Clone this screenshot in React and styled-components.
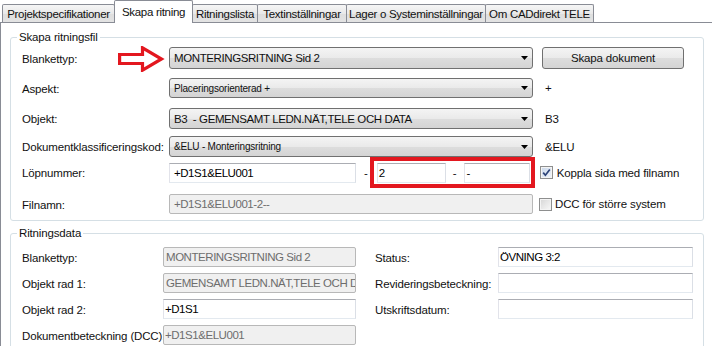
import React from 'react'
import styled, { createGlobalStyle } from 'styled-components'

const GlobalStyle = createGlobalStyle`
  html, body { margin: 0; padding: 0; background: #fff; }
  body {
    font-family: "Liberation Sans", Arial, sans-serif;
    font-size: 11.5px;
    letter-spacing: -0.15px;
    color: #111;
  }
`

const Window = styled.div`
  width: 712px;
  height: 346px;
  overflow: hidden;
  background: #fff;
`

const TabStrip = styled.div`
  display: flex;
  align-items: flex-end;
  height: 22px;
  padding-left: 2px;
`

const Tab = styled.div`
  position: relative;
  z-index: ${p => (p.$active ? 2 : 1)};
  width: ${p => p.$w}px;
  height: ${p => (p.$active ? 23 : 18)}px;
  margin-right: -1px;
  margin-bottom: ${p => (p.$active ? -1 : 0)}px;
  box-sizing: border-box;
  display: flex;
  align-items: center;
  justify-content: center;
  padding-bottom: ${p => (p.$active ? 1 : 0)}px;
  border: 1px solid #898c95;
  border-bottom: none;
  border-radius: 2px 2px 0 0;
  background: ${p => (p.$active ? '#fff' : 'linear-gradient(#f6f6f6, #e9e9e9 50%, #dedede 51%, #e3e3e3)')};
  letter-spacing: -0.3px;
  white-space: nowrap;
`

const TabPage = styled.div`
  width: 730px;
  height: 330px;
  box-sizing: border-box;
  border-top: 1px solid #898c95;
  border-left: 1px solid #898c95;
  padding-left: 9px;
`

const Group = styled.fieldset`
  width: 694px;
  box-sizing: border-box;
  margin: ${p => p.$mt}px 0 0 0;
  padding: 0;
  min-width: 0;
  border: 1px solid #d5dfe5;
  border-radius: 3px;
`

const Legend = styled.legend`
  margin-left: 6px;
  padding: 0 2px;
  line-height: 13px;
`

const GroupBody = styled.div`
  padding: ${p => p.$pt}px 0 ${p => p.$pb}px 11px;
`

const Row = styled.div`
  display: flex;
  align-items: center;
  height: ${p => p.$h}px;
  margin-top: ${p => p.$mt || 0}px;
`

const Label = styled.div`
  flex: none;
  width: ${p => p.$w || 147}px;
  box-sizing: border-box;
  padding-left: ${p => p.$pl || 0}px;
  padding-top: 1px;
  display: flex;
  align-items: center;
  white-space: nowrap;
`

const Arrow = styled.svg`
  margin-left: auto;
  margin-right: 4px;
`

const Combo = styled.div`
  flex: none;
  width: 364px;
  height: ${p => p.$h}px;
  box-sizing: border-box;
  display: flex;
  align-items: center;
  padding-left: 4px;
  border: 1px solid #707070;
  border-radius: 3px;
  background: linear-gradient(#f4f4f4, #eaeaea 50%, #dddddd 51%, #d4d4d4);
  font-size: ${p => (p.$small ? 10 : 11.5)}px;
  letter-spacing: ${p => (p.$small ? -0.2 : -0.4)}px;
  white-space: nowrap;
`

const DropArrow = styled.svg`
  margin-left: auto;
  margin-right: 4px;
  flex: none;
`

const Button = styled.div`
  flex: none;
  width: 142px;
  height: 22px;
  margin-left: 9px;
  box-sizing: border-box;
  display: flex;
  align-items: center;
  justify-content: center;
  border: 1px solid #707070;
  border-radius: 3px;
  background: linear-gradient(#f4f4f4, #eaeaea 50%, #dddddd 51%, #d4d4d4);
`

const Extra = styled.span`
  margin-left: 12px;
`

const Field = styled.div`
  flex: none;
  width: ${p => p.$w}px;
  height: 20px;
  box-sizing: border-box;
  display: flex;
  align-items: center;
  padding-left: ${p => p.$pl ?? 2}px;
  border: 1px solid;
  border-color: ${p => (p.$disabled ? '#b8b8b8' : '#abadb3 #dbdfe6 #e3e9ef #e2e3ea')};
  border-radius: ${p => (p.$disabled ? 2 : 0)}px;
  background: ${p => (p.$disabled ? '#f0f0f0' : '#fff')};
  color: ${p => (p.$disabled ? '#6d6d6d' : '#000')};
  letter-spacing: -0.45px;
  white-space: nowrap;
  overflow: hidden;
`

const Dash = styled.span`
  margin: 0 ${p => p.$r}px 0 ${p => p.$l}px;
`

const RedBox = styled.div`
  flex: none;
  width: 165px;
  height: 31px;
  box-sizing: border-box;
  display: flex;
  align-items: center;
  padding-left: 3px;
  border: 4px solid #e3171f;
`

const CheckBox = styled.span`
  flex: none;
  width: 13px;
  height: 13px;
  box-sizing: border-box;
  margin-left: ${p => p.$ml}px;
  display: flex;
  align-items: center;
  justify-content: center;
  border: 1px solid #8e8f8f;
  box-shadow: inset 0 0 0 1px #f4f4f4;
  background: ${p => (p.$checked ? 'linear-gradient(135deg, #c9d7ea, #f1f5fb)' : 'linear-gradient(135deg, #d6d6d6, #f9f9f9)')};
`

const CheckText = styled.span`
  margin-left: ${p => p.$ml}px;
  white-space: nowrap;
`

const DataGrid = styled.div`
  display: grid;
  grid-template-columns: 141px 193px 142px 195px;
  grid-auto-rows: 20px;
  row-gap: 6px;
  align-items: center;
`

const tabs = [
  ['Projektspecifikationer', 113],
  ['Skapa ritning', 79],
  ['Ritningslista', 66],
  ['Textinställningar', 90],
  ['Lager o Systeminställningar', 140],
  ['Om CADdirekt TELE', 109],
]

const Caret = () => (
  <DropArrow width="7" height="4" viewBox="0 0 7 4">
    <polygon points="0,0 7,0 3.5,4" fill="#000" />
  </DropArrow>
)

export default function App() {
  return (
    <Window>
      <GlobalStyle />
      <TabStrip>
        {tabs.map(([name, w], i) => (
          <Tab key={name} $w={w} $active={i === 1}>{name}</Tab>
        ))}
      </TabStrip>
      <TabPage>
        <Group $mt={8}>
          <Legend>Skapa ritningsfil</Legend>
          <GroupBody $pt={2} $pb={6}>
            <Row $h={24}>
              <Label>
                Blankettyp:
                <Arrow width="47" height="26" viewBox="0 0 47 26">
                  <polygon
                    points="1.6,8.5 24.5,8.5 24.5,1.8 43.5,13 24.5,24.2 24.5,17.5 1.6,17.5"
                    fill="#fff"
                    stroke="#e3171f"
                    strokeWidth="3.2"
                  />
                </Arrow>
              </Label>
              <Combo $h={22}>MONTERINGSRITNING Sid 2<Caret /></Combo>
              <Button>Skapa dokument</Button>
            </Row>
            <Row $h={20} $mt={8}>
              <Label>Aspekt:</Label>
              <Combo $h={20} $small>Placeringsorienterad +<Caret /></Combo>
              <Extra>+</Extra>
            </Row>
            <Row $h={21} $mt={10}>
              <Label>Objekt:</Label>
              <Combo $h={21}>B3&nbsp; - GEMENSAMT LEDN.NÄT,TELE OCH DATA<Caret /></Combo>
              <Extra>B3</Extra>
            </Row>
            <Row $h={21} $mt={7}>
              <Label>Dokumentklassificeringskod:</Label>
              <Combo $h={21} $small>&amp;ELU - Monteringsritning<Caret /></Combo>
              <Extra>&amp;ELU</Extra>
            </Row>
            <Row $h={31}>
              <Label>Löpnummer:</Label>
              <Field $w={187} $pl={4}>+D1S1&amp;ELU001</Field>
              <Dash $l={8} $r={2}>-</Dash>
              <RedBox>
                <Field $w={69} $pl={1}>2</Field>
                <Dash $l={7} $r={8}>-</Dash>
                <Field $w={66} $pl={1}>-</Field>
              </RedBox>
              <CheckBox $ml={5} $checked>
                <svg width="9" height="9" viewBox="0 0 9 9">
                  <path d="M1.2 4.6 L3.4 7.2 L7.8 1.4" fill="none" stroke="#2c4378" strokeWidth="1.7" />
                </svg>
              </CheckBox>
              <CheckText $ml={4}>Koppla sida med filnamn</CheckText>
            </Row>
            <Row $h={20} $mt={6}>
              <Label>Filnamn:</Label>
              <Field $w={364} $pl={4} $disabled>+D1S1&amp;ELU001-2--</Field>
              <CheckBox $ml={6} />
              <CheckText $ml={3}>DCC för större system</CheckText>
            </Row>
          </GroupBody>
        </Group>

        <Group $mt={6}>
          <Legend>Ritningsdata</Legend>
          <GroupBody $pt={7} $pb={20}>
            <DataGrid>
              <Label $w={141}>Blankettyp:</Label>
              <Field $w={193} $disabled>MONTERINGSRITNING Sid 2</Field>
              <Label $w={142} $pl={19}>Status:</Label>
              <Field $w={195} $pl={1}>ÖVNING 3:2</Field>

              <Label $w={141}>Objekt rad 1:</Label>
              <Field $w={193} $disabled>GEMENSAMT LEDN.NÄT,TELE OCH DATA</Field>
              <Label $w={142} $pl={19}>Revideringsbeteckning:</Label>
              <Field $w={195} />

              <Label $w={141}>Objekt rad 2:</Label>
              <Field $w={193} $pl={1}>+D1S1</Field>
              <Label $w={142} $pl={19}>Utskriftsdatum:</Label>
              <Field $w={195} />

              <Label $w={141}>Dokumentbeteckning (DCC):</Label>
              <Field $w={193} $pl={1} $disabled>+D1S1&amp;ELU001</Field>
            </DataGrid>
          </GroupBody>
        </Group>
      </TabPage>
    </Window>
  )
}
